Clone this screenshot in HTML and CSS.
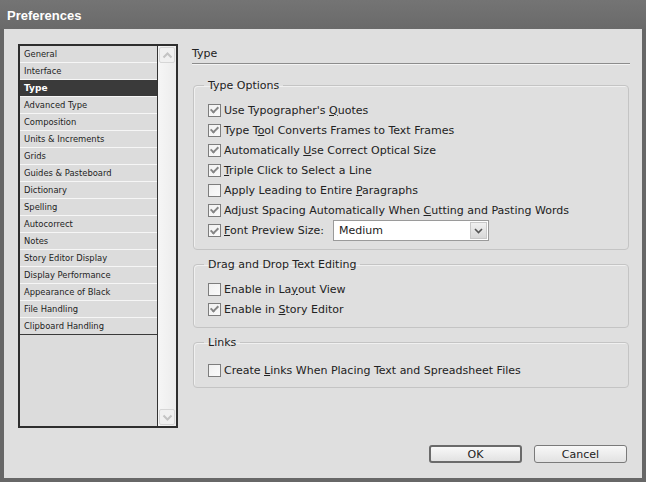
FILE: index.html
```html
<!DOCTYPE html>
<html>
<head>
<meta charset="utf-8">
<link rel="stylesheet" href="styles.css">
</head>
<body>
<div class="window">
  <div class="titlebar">Preferences</div>
  <div class="dialog">
    <div class="listbox">
      <ul class="items">
        <li>General</li>
        <li>Interface</li>
        <li class="sel">Type</li>
        <li>Advanced Type</li>
        <li>Composition</li>
        <li>Units &amp; Increments</li>
        <li>Grids</li>
        <li>Guides &amp; Pasteboard</li>
        <li>Dictionary</li>
        <li>Spelling</li>
        <li>Autocorrect</li>
        <li>Notes</li>
        <li>Story Editor Display</li>
        <li>Display Performance</li>
        <li>Appearance of Black</li>
        <li>File Handling</li>
        <li class="last">Clipboard Handling</li>
      </ul>
      <div class="scrollbar">
        <div class="sbtn"><svg width="11" height="7" viewBox="0 0 11 7"><polyline points="1.5,5.5 5.5,1.5 9.5,5.5" fill="none" stroke="#c4c4c4" stroke-width="2"/></svg></div>
        <div class="sbtn"><svg width="11" height="7" viewBox="0 0 11 7"><polyline points="1.5,1.5 5.5,5.5 9.5,1.5" fill="none" stroke="#c4c4c4" stroke-width="2"/></svg></div>
      </div>
    </div>

    <div class="main">
      <div class="heading">Type</div>

      <fieldset class="group g1">
        <legend>Type Options</legend>
        <div class="row"><span class="cb on"></span><span class="txt">Use Typographer's <u>Q</u>uotes</span></div>
        <div class="row"><span class="cb on"></span><span class="txt">Type T<u>o</u>ol Converts Frames to Text Frames</span></div>
        <div class="row"><span class="cb on"></span><span class="txt">Automatically <u>U</u>se Correct Optical Size</span></div>
        <div class="row"><span class="cb on"></span><span class="txt"><u>T</u>riple Click to Select a Line</span></div>
        <div class="row"><span class="cb"></span><span class="txt">Apply Leading to Entire <u>P</u>aragraphs</span></div>
        <div class="row"><span class="cb on"></span><span class="txt">Adjust Spacing Automatically When <u>C</u>utting and Pasting Words</span></div>
        <div class="row sel-row"><span class="cb on"></span><span class="txt"><u>F</u>ont Preview Size:</span>
          <div class="select"><span class="val">Medium</span><span class="arrow"><svg width="9" height="6" viewBox="0 0 9 6"><polyline points="1,1 4.5,4.5 8,1" fill="none" stroke="#555" stroke-width="1.6"/></svg></span></div>
        </div>
      </fieldset>

      <fieldset class="group g2">
        <legend>Drag and Drop Text Editing</legend>
        <div class="row"><span class="cb"></span><span class="txt">Enable in La<u>y</u>out View</span></div>
        <div class="row"><span class="cb on"></span><span class="txt">Enable in <u>S</u>tory Editor</span></div>
      </fieldset>

      <fieldset class="group g3">
        <legend>Links</legend>
        <div class="row"><span class="cb"></span><span class="txt">Create <u>L</u>inks When Placing Text and Spreadsheet Files</span></div>
      </fieldset>
    </div>

    <div class="buttons">
      <button class="btn default">OK</button>
      <button class="btn">Cancel</button>
    </div>
  </div>
</div>
</body>
</html>
```

FILE: styles.css
```css
html, body {
  margin: 0;
  padding: 0;
}
body {
  width: 646px;
  height: 482px;
  overflow: hidden;
  background: #5e5e5e;
}
.window {
  width: 646px;
  height: 482px;
  display: flex;
  flex-direction: column;
  background: #676767;
  box-sizing: border-box;
}
.titlebar {
  height: 29px;
  flex: none;
  background: linear-gradient(#747474, #6a6a6a);
  color: #fff;
  font: bold 13px "Liberation Sans", Arial, sans-serif;
  line-height: 31px;
  padding-left: 7px;
  box-sizing: border-box;
}
.dialog {
  flex: 1;
  margin: 0 4px 4px 4px;
  background: #dfdfdf;
  display: grid;
  grid-template-columns: 160px 1fr;
  grid-template-rows: 1fr auto;
  column-gap: 14px;
  row-gap: 17px;
  padding: 15px 12px 15px 14px;
  box-sizing: border-box;
  font-family: "DejaVu Sans", Verdana, sans-serif;
  color: #222;
}
.listbox {
  grid-row: 1;
  grid-column: 1;
  border: 2px solid #2e2e2e;
  display: flex;
  background: #dcdcdc;
  min-height: 0;
}
.items {
  list-style: none;
  margin: 0;
  padding: 0;
  width: 137px;
  border-right: 1px solid #333;
  font: 8.4px "DejaVu Sans", Verdana, sans-serif;
  color: #1c1c1c;
}
.items li {
  height: 16px;
  line-height: 16px;
  border-bottom: 1px solid #f6f6f6;
  padding-left: 4px;
  white-space: nowrap;
}
.items li.sel {
  background: #3a3a3a;
  color: #fff;
  font-weight: bold;
  font-size: 9px;
}
.items li.last {
  border-bottom-color: #3a3a3a;
}
.scrollbar {
  width: 18px;
  background: linear-gradient(90deg, #f6f6f6, #ececec);
  display: flex;
  flex-direction: column;
  justify-content: space-between;
  padding: 1px 0;
}
.sbtn {
  width: 16px;
  height: 16px;
  margin-left: 1px;
  border: 1px solid #d6d6d6;
  border-radius: 2px;
  box-sizing: border-box;
  background: #f0f0f0;
  display: flex;
  align-items: center;
  justify-content: center;
}
.main {
  grid-row: 1;
  grid-column: 2;
  padding-top: 2px;
  display: flex;
  flex-direction: column;
  font-size: 11px;
}
.heading {
  height: 17px;
  line-height: 16px;
  border-bottom: 1px solid #8c8c8c;
  box-shadow: 0 1px 0 #f3f3f3;
  font-size: 11px;
  margin-bottom: 14px;
}
.group {
  margin: 0 1px;
  border: 1px solid #c4c4c4;
  border-radius: 4px;
  box-shadow: inset 1px 1px 0 #f0f0f0;
  padding: 7px 8px 8px 14px;
}
.group + .group {
  margin-top: 7px;
}
.group legend {
  padding: 0 4px;
  margin-left: -4px;
  line-height: 15px;
  font-size: 11px;
}
.g2 {
  padding-bottom: 8px;
}
.g3 {
  padding-top: 10px;
  padding-bottom: 7px;
}
.row {
  height: 20px;
  display: flex;
  align-items: center;
  white-space: nowrap;
  font-size: 11px;
}
.sel-row {
  height: 21px;
}
.cb {
  width: 13px;
  height: 13px;
  box-sizing: border-box;
  border: 1px solid #7d7d7d;
  background: linear-gradient(135deg, #f0f0f0, #fafafa);
  margin-right: 3px;
  flex: none;
  display: flex;
  align-items: center;
  justify-content: center;
}
.cb.on::after {
  content: "";
  width: 3px;
  height: 6px;
  border-right: 2px solid #858585;
  border-bottom: 2px solid #858585;
  transform: translateY(-1px) rotate(45deg);
}
.select {
  margin-left: auto;
  margin-right: 131px;
  width: 156px;
  height: 21px;
  box-sizing: border-box;
  border: 1px solid #9a9a9a;
  background: #fff;
  display: flex;
  align-items: center;
  justify-content: space-between;
}
.select .val {
  padding-left: 5px;
}
.select .arrow {
  width: 17px;
  height: 17px;
  margin-right: 1px;
  background: linear-gradient(#f0f0f0, #d8d8d8);
  border: 1px solid #c8c8c8;
  box-sizing: border-box;
  display: flex;
  align-items: center;
  justify-content: center;
}
.buttons {
  grid-row: 2;
  grid-column: 1 / 3;
  display: flex;
  justify-content: flex-end;
  gap: 12px;
  padding-right: 3px;
}
.btn {
  width: 93px;
  height: 18px;
  padding: 0;
  border: 1px solid #7a7a7a;
  border-radius: 3px;
  background: linear-gradient(#f8f8f8, #e2e2e2);
  font: 11px "DejaVu Sans", Verdana, sans-serif;
  color: #222;
}
.btn.default {
  border: 2px solid #6a6a6a;
}
```
